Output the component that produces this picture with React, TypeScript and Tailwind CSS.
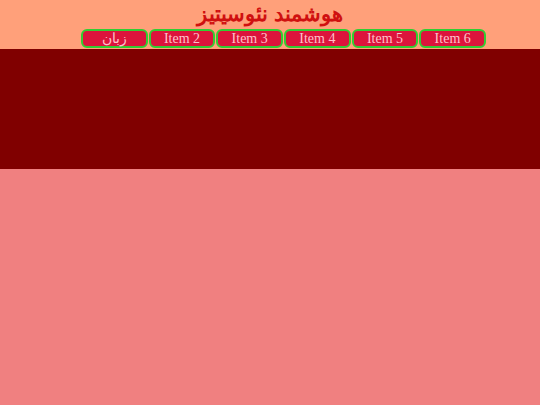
const items = ["زبان", "Item 2", "Item 3", "Item 4", "Item 5", "Item 6"];

export default function App() {
  return (
    <div className="w-full min-h-screen flex flex-col bg-[#f08080] font-['Liberation_Serif',serif]">
      <header className="bg-[#ffa07a] pb-px">
        <h1 className="text-center text-[21px] leading-[29px] font-bold text-[#d01010]">
          هوشمند نئوسیتیز
        </h1>
        <nav className="ml-[15%] w-[75%] flex gap-[1px]">
          {items.map((item) => (
            <a
              key={item}
              href="#"
              className="flex-1 h-[19px] flex items-center justify-center rounded-md border-2 border-[#32cd32] bg-[#dc143c] text-[14px] leading-none text-[#ffc0cb]"
            >
              {item}
            </a>
          ))}
        </nav>
      </header>
      <section className="h-[120px] bg-[#800000]" />
      <main className="flex-1" />
    </div>
  );
}
